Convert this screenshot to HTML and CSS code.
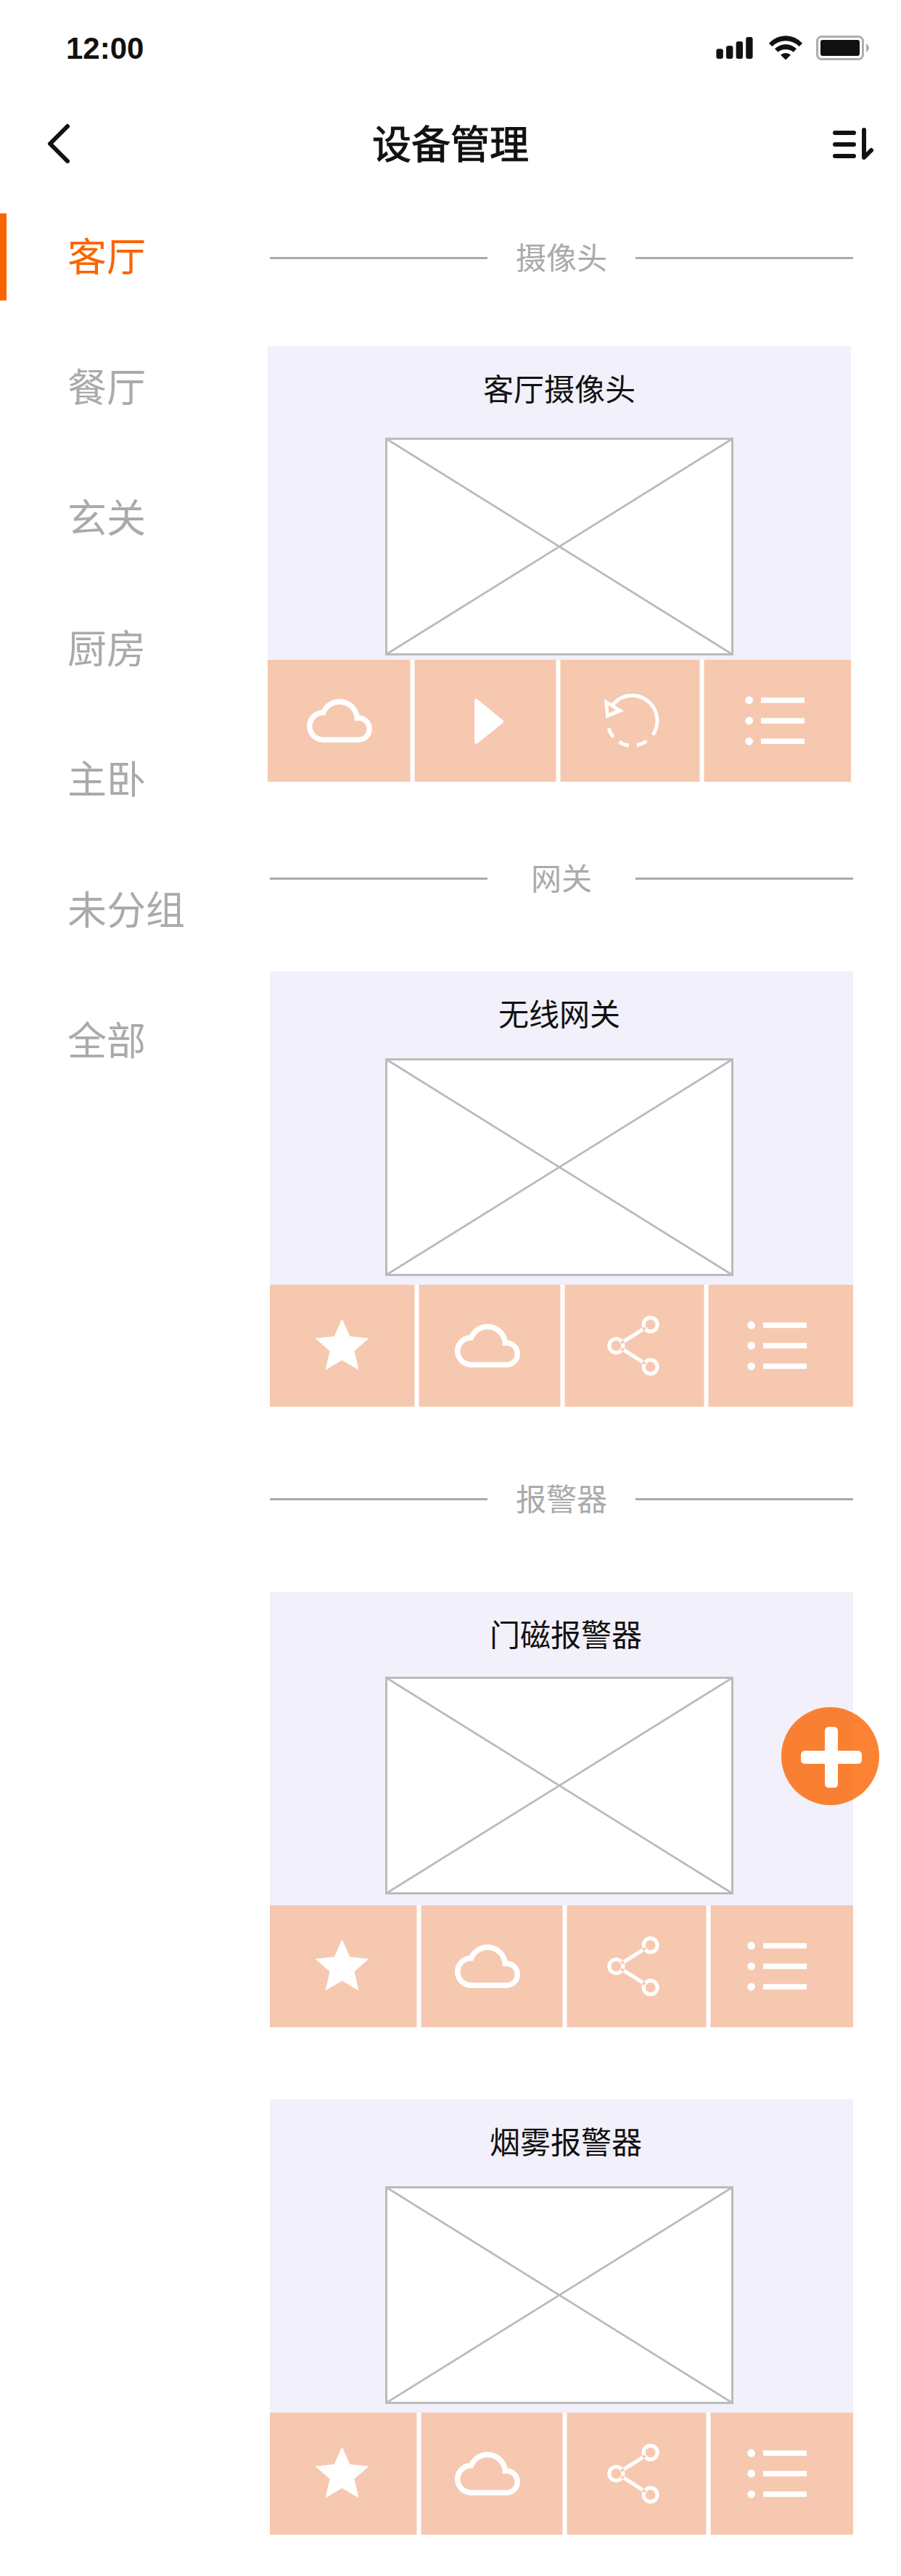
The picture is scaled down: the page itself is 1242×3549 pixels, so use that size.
FILE: index.html
```html
<!DOCTYPE html>
<html lang="zh-CN">
<head>
<meta charset="utf-8">
<title>设备管理</title>
<link rel="stylesheet" href="styles.css">
</head>
<body>
<svg class="sprite" aria-hidden="true">
  <symbol id="cloud" viewBox="0 4 24 16"><path fill="#fff" d="M19,18H6A4,4 0 0,1 2,14A4,4 0 0,1 6,10H6.71C7.37,7.69 9.5,6 12,6A5.5,5.5 0 0,1 17.5,11.5V12H19A3,3 0 0,1 22,15A3,3 0 0,1 19,18M19.35,10.03C18.67,6.59 15.64,4 12,4C9.11,4 6.6,5.64 5.35,8.04C2.34,8.36 0,10.9 0,14A6,6 0 0,0 6,20H19A5,5 0 0,0 24,15C24,12.36 21.95,10.22 19.35,10.03Z"/></symbol>
  <symbol id="star" viewBox="0 0 75 75"><path fill="#fff" d="M37.5 0L48.2 24L74.6 26.7L54.5 44.3L60.5 70.5L37.5 57L14.5 70.5L20.5 44.3L.4 26.7L26.8 24Z"/></symbol>
  <symbol id="share" viewBox="0 0 72 84">
    <g fill="none" stroke="#fff" stroke-width="5.2"><circle cx="12.3" cy="42" r="9.5"/><circle cx="59.6" cy="12.9" r="9.5"/><circle cx="59.6" cy="71.1" r="9.5"/><path d="M23 36L49 19.6M23 48L49 64.4"/></g>
    <path d="M19.4 38.2L22.8 36.1M19.4 45.8L22.8 47.9M49.2 19.3L52.4 17.3M49.2 64.7L52.4 66.7" stroke="#f6c8b0" stroke-width="3.8"/>
  </symbol>
  <symbol id="list" viewBox="0 -1 82 68"><g fill="#fff"><circle cx="5.6" cy="4.7" r="5.4"/><circle cx="5.6" cy="33" r="5.4"/><circle cx="5.6" cy="61.3" r="5.4"/><path d="M22 1h60v7.5h-60zM22 29.3h60v7.5h-60zM22 57.5h60v7.5h-60z"/></g></symbol>
  <symbol id="play" viewBox="0 0 40 62"><path fill="#fff" stroke="#fff" stroke-width="5" stroke-linejoin="round" d="M2.5 2.5V59.2L37.5 31Z"/></symbol>
  <symbol id="replay" viewBox="-1 -1 77 77">
    <path fill="none" stroke="#fff" stroke-width="4.9" d="M12.6 14L11.8 15A34.5 34.5 0 0 1 38.5 2.3A34.5 34.5 0 0 1 66.8 56.5M58.3 65.1A34.5 34.5 0 0 1 44.8 70.7M34 71A34.5 34.5 0 0 1 20.5 66.3M12.5 59.5A34.5 34.5 0 0 1 5.9 47.2"/>
    <path fill="#f6c8b0" d="M5.6 15.6L6.2 26.8L15.6 22.5Z"/>
    <path fill="#fff" fill-rule="evenodd" d="M0 7L27 23.4L2.3 34ZM5.6 15.6L6.2 26.8L15.6 22.5Z"/>
  </symbol>
</svg>

<div class="screen">
  <div class="status">
    <span class="time">12:00</span>
    <svg class="status-icons" width="212" height="36" viewBox="986 48 212 36">
      <g fill="#111"><rect x="987.4" y="67.3" width="9.4" height="13.7" rx="3"/><rect x="1001" y="63" width="9.4" height="18" rx="3"/><rect x="1014.6" y="57" width="9.4" height="24" rx="3"/><rect x="1028.2" y="51" width="9.4" height="30" rx="3"/>
      <path d="M1059.8 59.7A31 31 0 0 1 1106.2 59.7L1101.5 64A25.8 25.8 0 0 0 1064.5 64ZM1068 67.3A21 21 0 0 1 1098 67.3L1093.5 71.7A16.7 16.7 0 0 0 1072.5 71.7ZM1076 75.8A9.5 8.5 0 0 1 1090 75.8L1083 82.5Z"/>
      <rect x="1131" y="55" width="54" height="22" rx="3"/></g>
      <rect x="1126.5" y="50.5" width="63" height="31" rx="6" fill="none" stroke="#adadad" stroke-width="3"/>
      <path d="M1194 60Q1198 63 1198 66T1194 72Z" fill="#adadad"/>
    </svg>
  </div>
  <header class="navbar">
    <svg class="back" width="34" height="60" viewBox="64 168 34 60"><path d="M93 174L69 198L93 222" fill="none" stroke="#111" stroke-width="6" stroke-linecap="round" stroke-linejoin="round"/></svg>
    <h1 class="title">设备管理</h1>
    <svg class="sort" width="60" height="48" viewBox="1146 174 60 48"><path d="M1151 183H1177M1151 199H1177M1151 215H1177M1191 179V217L1201 207" fill="none" stroke="#111" stroke-width="6" stroke-linecap="round" stroke-linejoin="round"/></svg>
  </header>

  <div class="body">
    <nav class="rooms">
      <a class="room active">客厅</a>
      <a class="room">餐厅</a>
      <a class="room">玄关</a>
      <a class="room">厨房</a>
      <a class="room">主卧</a>
      <a class="room">未分组</a>
      <a class="room">全部</a>
    </nav>

    <main class="devices">
      <h2 class="group"><span>摄像头</span></h2>
      <section class="card camera">
        <h3 class="name">客厅摄像头</h3>
        <svg class="photo" viewBox="0 0 480 300"><path d="M1.5 1.5H478.5V298.5H1.5Z" fill="#fff"/><path d="M1.5 1.5L478.5 298.5M1.5 298.5L478.5 1.5" stroke-width="2.8"/><path d="M1.5 1.5H478.5V298.5H1.5Z" fill="none" stroke-width="3"/></svg>
        <div class="actions">
          <svg class="cloud"><use href="#cloud"/></svg><i class="bar"></i>
          <svg class="play"><use href="#play"/></svg><i class="bar"></i>
          <svg class="replay"><use href="#replay"/></svg><i class="bar"></i>
          <svg class="list"><use href="#list"/></svg>
        </div>
      </section>

      <h2 class="group"><span>网关</span></h2>
      <section class="card gateway">
        <h3 class="name">无线网关</h3>
        <svg class="photo" viewBox="0 0 480 300"><path d="M1.5 1.5H478.5V298.5H1.5Z" fill="#fff"/><path d="M1.5 1.5L478.5 298.5M1.5 298.5L478.5 1.5" stroke-width="2.8"/><path d="M1.5 1.5H478.5V298.5H1.5Z" fill="none" stroke-width="3"/></svg>
        <div class="actions">
          <svg class="star"><use href="#star"/></svg><i class="bar"></i>
          <svg class="cloud"><use href="#cloud"/></svg><i class="bar"></i>
          <svg class="share"><use href="#share"/></svg><i class="bar"></i>
          <svg class="list"><use href="#list"/></svg>
        </div>
      </section>

      <h2 class="group"><span>报警器</span></h2>
      <section class="card alarm door">
        <h3 class="name">门磁报警器</h3>
        <svg class="photo" viewBox="0 0 480 300"><path d="M1.5 1.5H478.5V298.5H1.5Z" fill="#fff"/><path d="M1.5 1.5L478.5 298.5M1.5 298.5L478.5 1.5" stroke-width="2.8"/><path d="M1.5 1.5H478.5V298.5H1.5Z" fill="none" stroke-width="3"/></svg>
        <div class="actions">
          <svg class="star"><use href="#star"/></svg><i class="bar"></i>
          <svg class="cloud"><use href="#cloud"/></svg><i class="bar"></i>
          <svg class="share"><use href="#share"/></svg><i class="bar"></i>
          <svg class="list"><use href="#list"/></svg>
        </div>
      </section>

      <section class="card alarm smoke">
        <h3 class="name">烟雾报警器</h3>
        <svg class="photo" viewBox="0 0 480 300"><path d="M1.5 1.5H478.5V298.5H1.5Z" fill="#fff"/><path d="M1.5 1.5L478.5 298.5M1.5 298.5L478.5 1.5" stroke-width="2.8"/><path d="M1.5 1.5H478.5V298.5H1.5Z" fill="none" stroke-width="3"/></svg>
        <div class="actions">
          <svg class="star"><use href="#star"/></svg><i class="bar"></i>
          <svg class="cloud"><use href="#cloud"/></svg><i class="bar"></i>
          <svg class="share"><use href="#share"/></svg><i class="bar"></i>
          <svg class="list"><use href="#list"/></svg>
        </div>
      </section>
    </main>
  </div>

  <button class="fab" aria-label="添加设备">
    <svg width="135" height="135" viewBox="0 0 135 135"><path d="M33 60H60V33Q60 27 66 27H72Q78 27 78 33V60H105Q111 60 111 66V72Q111 78 105 78H78V105Q78 111 72 111H66Q60 111 60 105V78H33Q27 78 27 72V66Q27 60 33 60Z" fill="#fff"/></svg>
  </button>
</div>
</body>
</html>
```
FILE: styles.css
```css
* { box-sizing: border-box; }
body { margin: 0; background: #fff; font-family: "Noto Sans CJK SC", sans-serif; }
svg { display: block; }
.sprite { display: none; }
h1, h2, h3 { margin: 0; font-weight: 400; }

.screen { position: relative; width: 1242px; height: 3549px; overflow: hidden; background: #fff; color: #111; }

/* status bar */
.status { display: flex; justify-content: space-between; height: 132px; padding: 48px 44px 0 91px; }
.time { height: 36px; font: 700 42px/37px "Liberation Sans", Arial, sans-serif; }

/* navigation bar */
.navbar { display: flex; align-items: center; justify-content: space-between; height: 132px; padding: 0 36px 0 64px; }
.title { width: 216px; margin-left: -2px; padding-bottom: 5px; font-size: 54px; -webkit-text-stroke: 1.1px #111; line-height: 80px; white-space: nowrap; }

.body { display: flex; }

/* room list */
.rooms { display: flex; flex-direction: column; gap: 60px; width: 369px; padding-top: 30px; }
.room { height: 120px; padding-left: 93px; border-left: 0 solid #fa6400; color: #aaa; font-size: 54px; line-height: 113px; }
.room.active { padding-left: 84px; border-left-width: 9px; color: #fa6400; }

/* device groups */
.devices { width: 807px; padding-top: 60px; }
.group { display: grid; grid-template-columns: 300px 1fr 300px; align-items: center; height: 63px; margin-left: 3px; color: #aaa; font-size: 42px; line-height: 57px; text-align: center; }
.group span { padding-bottom: 6px; }
.group::before, .group::after { content: ""; height: 3px; background: #aaa; }

.card { display: flex; flex-direction: column; width: 804px; height: 600px; margin-left: 3px; background: #f2f0fa; }
.name { width: 100%; padding: 27px 0 2px; font-size: 42px; line-height: 60px; text-align: center; }
.photo { width: 480px; height: 300px; margin: 31px 0 0 159px; stroke: #bbb; }
.actions { display: grid; align-items: center; justify-items: center; height: 168px; margin-top: auto; background: #f6c8b0; }
.bar { justify-self: stretch; align-self: stretch; background: linear-gradient(90deg, #fbe3d7 1px, #fff 1px, #fff 6px, #fbe3d7 6px); }

.camera { margin: 90px 0 102px; }
.camera .photo { margin: 37px 0 0 162px; }
.camera .actions { grid-template-columns: 196px 7px 194px 7px 191px 7px 202px; }
.gateway { margin-top: 96px; margin-bottom: 96px; }
.gateway .name { padding-right: 6px; }
.gateway .actions { grid-template-columns: 199px 7px 194px 7px 191px 7px 199px; }
.alarm .name { padding-left: 12px; }
.alarm .actions { grid-template-columns: 202px 7px 194px 7px 191px 7px 196px; }
.door { margin-top: 96px; margin-bottom: 99px; }
.door .photo { margin-top: 28px; }

/* action icons, aligned on shared column positions */
.actions svg { justify-self: start; }
.cloud { width: 90px; height: 60px; margin-left: 49px; }
.alarm .cloud { margin-left: 46px; }
.camera .cloud { margin-left: 54px; }
.star { width: 75px; height: 75px; margin-left: 61.5px; }
.share { width: 72px; height: 84px; margin-left: 58px; }
.alarm .share { margin-left: 55px; }
.list { width: 82px; height: 68px; margin-left: 53px; }
.alarm .list { margin-left: 50px; }
.camera .list { margin-left: 56px; }
.play { width: 40px; height: 62px; margin: 1px 0 0 82px; }
.replay { width: 77px; height: 77px; margin-left: 59px; }

/* floating add button */
.fab { position: absolute; left: 1077px; top: 2352px; width: 135px; height: 135px; padding: 0; border: 0; border-radius: 50%; background: rgba(250, 100, 0, .8); }
```
